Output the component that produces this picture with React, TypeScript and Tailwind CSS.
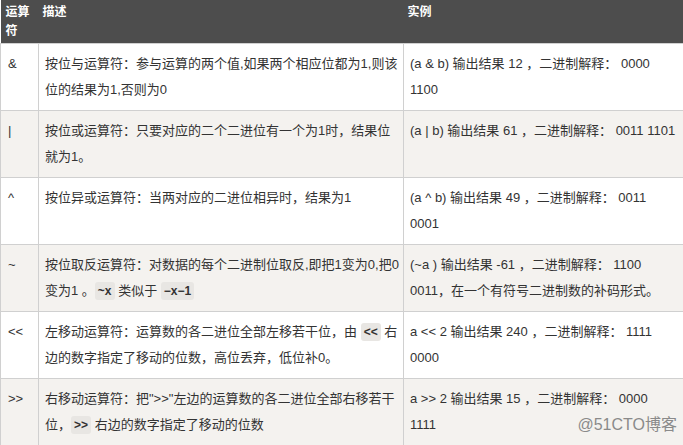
import type { ReactNode } from "react";

type Row = { op: string; desc: ReactNode; example: string };

function Code({ children }: { children: ReactNode }) {
  return (
    <code className="rounded-[3px] bg-[#e8e6e3] px-[3px] py-[2px] font-['Liberation_Sans','Noto_Sans_CJK_SC',sans-serif] text-[12px] font-bold text-[#333]">
      {children}
    </code>
  );
}

const rows: Row[] = [
  {
    op: "&",
    desc: "按位与运算符：参与运算的两个值,如果两个相应位都为1,则该位的结果为1,否则为0",
    example: "(a & b) 输出结果 12 ，二进制解释： 0000 1100",
  },
  {
    op: "|",
    desc: "按位或运算符：只要对应的二个二进位有一个为1时，结果位就为1。",
    example: "(a | b) 输出结果 61 ，二进制解释： 0011 1101",
  },
  {
    op: "^",
    desc: "按位异或运算符：当两对应的二进位相异时，结果为1",
    example: "(a ^ b) 输出结果 49 ，二进制解释： 0011 0001",
  },
  {
    op: "~",
    desc: (
      <>
        按位取反运算符：对数据的每个二进制位取反,即把1变为0,把0变为1 。<Code>~x</Code> 类似于 <Code>−x−1</Code>
      </>
    ),
    example: "(~a ) 输出结果 -61 ，二进制解释： 1100 0011，在一个有符号二进制数的补码形式。",
  },
  {
    op: "<<",
    desc: (
      <>
        左移动运算符：运算数的各二进位全部左移若干位，由 <Code>{"<<"}</Code> 右边的数字指定了移动的位数，高位丢弃，低位补0。
      </>
    ),
    example: "a << 2 输出结果 240 ，二进制解释： 1111 0000",
  },
  {
    op: ">>",
    desc: (
      <>
        右移动运算符：把"&gt;&gt;"左边的运算数的各二进位全部右移若干位，<Code>{">>"}</Code> 右边的数字指定了移动的位数
      </>
    ),
    example: "a >> 2 输出结果 15 ，二进制解释： 0000 1111",
  },
];

export default function App() {
  return (
    <div className="relative h-[445px] w-[683px] overflow-hidden bg-white font-['Liberation_Sans','Noto_Sans_CJK_SC',sans-serif] text-[13px] text-[#333]">
      <table className="w-[683px] table-fixed border-collapse">
        <colgroup>
          <col className="w-[38px]" />
          <col className="w-[365px]" />
          <col className="w-[280px]" />
        </colgroup>
        <thead>
          <tr className="h-[43px] bg-[#4d4d4d] text-left align-top text-[12px] font-bold leading-[19px] text-white">
            <th className="px-[5px] pt-[3px] font-bold">运算符</th>
            <th className="px-[4px] pt-[3px] font-bold">描述</th>
            <th className="px-[4px] pt-[3px] font-bold">实例</th>
          </tr>
        </thead>
        <tbody>
          {rows.map((r, i) => (
            <tr
              key={r.op}
              className={`h-[67px] align-top leading-[26px] ${i % 2 === 1 ? "bg-[#f4f2ef]" : "bg-white"}`}
            >
              <td className="border border-[#d0d0d0] px-[7px] py-[7px]">{r.op}</td>
              <td className="border border-[#d0d0d0] py-[7px] pl-[6px] pr-[1px]">{r.desc}</td>
              <td className="border border-[#d0d0d0] py-[7px] pl-[6px] pr-[6px]">{r.example}</td>
            </tr>
          ))}
        </tbody>
      </table>
      <div className="absolute bottom-[8px] right-[6px] text-[16px] text-[#8a8a8a]">@51CTO博客</div>
    </div>
  );
}
